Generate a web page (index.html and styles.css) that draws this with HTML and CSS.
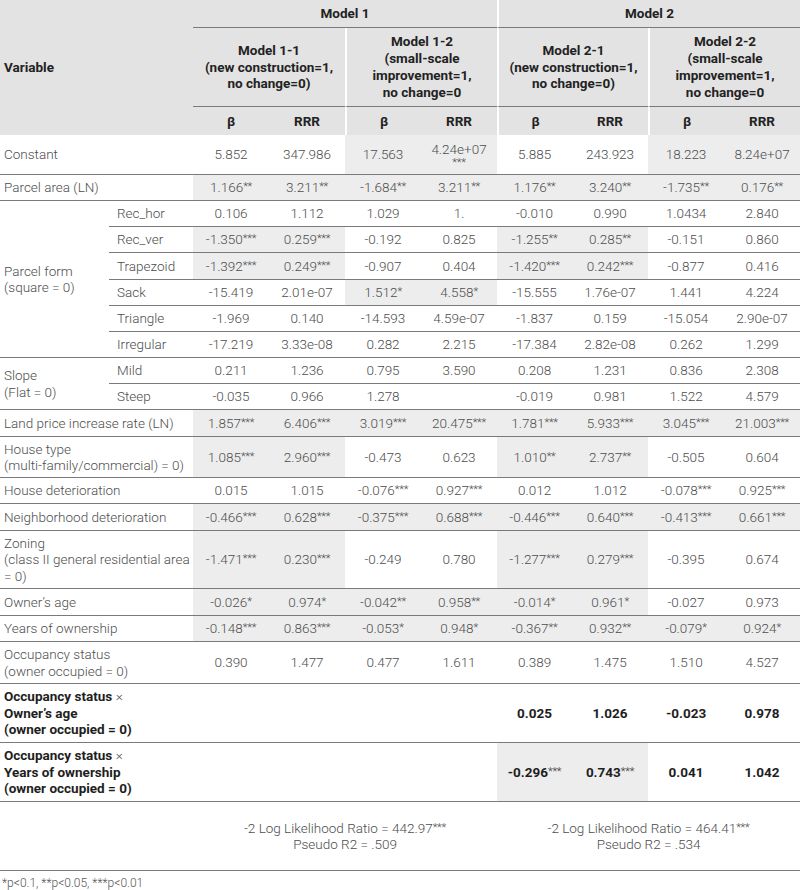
FILE: index.html
```html
<!DOCTYPE html>
<html lang="en">
<head>
<meta charset="utf-8">
<title>Regression table</title>
<link rel="stylesheet" href="styles.css">
</head>
<body>
<table class="tbl">
  <colgroup>
    <col class="c-lab1"><col class="c-lab2">
    <col class="c-d"><col class="c-d"><col class="c-d"><col class="c-d">
    <col class="c-d5"><col class="c-d"><col class="c-d"><col class="c-d">
  </colgroup>
  <thead>
    <tr class="h1">
      <th class="var" rowspan="3" colspan="2">Variable</th>
      <th class="mh" colspan="4">Model 1</th>
      <th class="mh div" colspan="4">Model 2</th>
    </tr>
    <tr class="h2">
      <th class="sh" colspan="2">Model 1-1<br>(new construction=1,<br>no change=0)</th>
      <th class="sh div" colspan="2">Model 1-2<br>(small-scale<br>improvement=1,<br>no change=0</th>
      <th class="sh div" colspan="2">Model 2-1<br>(new construction=1,<br>no change=0)</th>
      <th class="sh div" colspan="2">Model 2-2<br>(small-scale<br>improvement=1,<br>no change=0</th>
    </tr>
    <tr class="h3">
      <th class="bh">β</th><th class="bh">RRR</th>
      <th class="bh div">β</th><th class="bh">RRR</th>
      <th class="bh div">β</th><th class="bh">RRR</th>
      <th class="bh div">β</th><th class="bh">RRR</th>
    </tr>
  </thead>
  <tbody>
    <tr class="r40">
      <td class="lab" colspan="2">Constant</td>
      <td>5.852</td><td>347.986</td>
      <td class="sh1">17.563</td><td class="sh1 stack">4.24e+07<br><span class="st">***</span></td>
      <td>5.885</td><td>243.923</td>
      <td class="sh1">18.223</td><td class="sh1">8.24e+07</td>
    </tr>
    <tr class="r26">
      <td class="lab" colspan="2">Parcel area (LN)</td>
      <td class="sh1">1.166<span class="st">**</span></td><td class="sh1">3.211<span class="st">**</span></td>
      <td class="sh1">-1.684<span class="st">**</span></td><td class="sh1">3.211<span class="st">**</span></td>
      <td class="sh1">1.176<span class="st">**</span></td><td class="sh1">3.240<span class="st">**</span></td>
      <td class="sh1">-1.735<span class="st">**</span></td><td class="sh1">0.176<span class="st">**</span></td>
    </tr>
    <tr class="r26">
      <td class="lab" rowspan="6">Parcel form<br>(square = 0)</td>
      <td class="sub">Rec_hor</td>
      <td>0.106</td><td>1.112</td>
      <td>1.029</td><td>1.</td>
      <td>-0.010</td><td>0.990</td>
      <td>1.0434</td><td>2.840</td>
    </tr>
    <tr class="r26">
      <td class="sub">Rec_ver</td>
      <td class="sh1">-1.350<span class="st">***</span></td><td class="sh1">0.259<span class="st">***</span></td>
      <td>-0.192</td><td>0.825</td>
      <td class="sh1">-1.255<span class="st">**</span></td><td class="sh1">0.285<span class="st">**</span></td>
      <td>-0.151</td><td>0.860</td>
    </tr>
    <tr class="r27">
      <td class="sub">Trapezoid</td>
      <td class="sh1">-1.392<span class="st">***</span></td><td class="sh1">0.249<span class="st">***</span></td>
      <td>-0.907</td><td>0.404</td>
      <td class="sh1">-1.420<span class="st">***</span></td><td class="sh1">0.242<span class="st">***</span></td>
      <td>-0.877</td><td>0.416</td>
    </tr>
    <tr class="r26">
      <td class="sub">Sack</td>
      <td>-15.419</td><td>2.01e-07</td>
      <td class="sh1">1.512<span class="st">*</span></td><td class="sh1">4.558<span class="st">*</span></td>
      <td>-15.555</td><td>1.76e-07</td>
      <td>1.441</td><td>4.224</td>
    </tr>
    <tr class="r26">
      <td class="sub">Triangle</td>
      <td>-1.969</td><td>0.140</td>
      <td>-14.593</td><td>4.59e-07</td>
      <td>-1.837</td><td>0.159</td>
      <td>-15.054</td><td>2.90e-07</td>
    </tr>
    <tr class="r26">
      <td class="sub">Irregular</td>
      <td>-17.219</td><td>3.33e-08</td>
      <td>0.282</td><td>2.215</td>
      <td>-17.384</td><td>2.82e-08</td>
      <td>0.262</td><td>1.299</td>
    </tr>
    <tr class="r26">
      <td class="lab" rowspan="2">Slope<br>(Flat = 0)</td>
      <td class="sub">Mild</td>
      <td>0.211</td><td>1.236</td>
      <td>0.795</td><td>3.590</td>
      <td>0.208</td><td>1.231</td>
      <td>0.836</td><td>2.308</td>
    </tr>
    <tr class="r26">
      <td class="sub">Steep</td>
      <td>-0.035</td><td>0.966</td>
      <td>1.278</td><td></td>
      <td>-0.019</td><td>0.981</td>
      <td>1.522</td><td>4.579</td>
    </tr>
    <tr class="r27">
      <td class="lab" colspan="2">Land price increase rate (LN)</td>
      <td class="sh1">1.857<span class="st">***</span></td><td class="sh1">6.406<span class="st">***</span></td>
      <td class="sh1">3.019<span class="st">***</span></td><td class="sh1">20.475<span class="st">***</span></td>
      <td class="sh1">1.781<span class="st">***</span></td><td class="sh1">5.933<span class="st">***</span></td>
      <td class="sh1">3.045<span class="st">***</span></td><td class="sh1">21.003<span class="st">***</span></td>
    </tr>
    <tr class="r41">
      <td class="lab" colspan="2">House type<br>(multi-family/commercial) = 0)</td>
      <td class="sh1">1.085<span class="st">***</span></td><td class="sh1">2.960<span class="st">***</span></td>
      <td>-0.473</td><td>0.623</td>
      <td class="sh1">1.010<span class="st">**</span></td><td class="sh1">2.737<span class="st">**</span></td>
      <td>-0.505</td><td>0.604</td>
    </tr>
    <tr class="r26">
      <td class="lab" colspan="2">House deterioration</td>
      <td>0.015</td><td>1.015</td>
      <td>-0.076<span class="st">***</span></td><td>0.927<span class="st">***</span></td>
      <td>0.012</td><td>1.012</td>
      <td>-0.078<span class="st">***</span></td><td>0.925<span class="st">***</span></td>
    </tr>
    <tr class="r27">
      <td class="lab" colspan="2">Neighborhood deterioration</td>
      <td class="sh1">-0.466<span class="st">***</span></td><td class="sh1">0.628<span class="st">***</span></td>
      <td class="sh1">-0.375<span class="st">***</span></td><td class="sh1">0.688<span class="st">***</span></td>
      <td class="sh1">-0.446<span class="st">***</span></td><td class="sh1">0.640<span class="st">***</span></td>
      <td class="sh1">-0.413<span class="st">***</span></td><td class="sh1">0.661<span class="st">***</span></td>
    </tr>
    <tr class="r58">
      <td class="lab nw" colspan="2">Zoning<br>(class II general residential area<br>= 0)</td>
      <td class="sh1">-1.471<span class="st">***</span></td><td class="sh1">0.230<span class="st">***</span></td>
      <td>-0.249</td><td>0.780</td>
      <td class="sh1">-1.277<span class="st">***</span></td><td class="sh1">0.279<span class="st">***</span></td>
      <td>-0.395</td><td>0.674</td>
    </tr>
    <tr class="r27">
      <td class="lab" colspan="2">Owner’s age</td>
      <td class="sh1">-0.026<span class="st">*</span></td><td class="sh1">0.974<span class="st">*</span></td>
      <td class="sh1">-0.042<span class="st">**</span></td><td class="sh1">0.958<span class="st">**</span></td>
      <td class="sh1">-0.014<span class="st">*</span></td><td class="sh1">0.961<span class="st">*</span></td>
      <td>-0.027</td><td>0.973</td>
    </tr>
    <tr class="r26">
      <td class="lab" colspan="2">Years of ownership</td>
      <td class="sh1">-0.148<span class="st">***</span></td><td class="sh1">0.863<span class="st">***</span></td>
      <td class="sh1">-0.053<span class="st">*</span></td><td class="sh1">0.948<span class="st">*</span></td>
      <td class="sh1">-0.367<span class="st">**</span></td><td class="sh1">0.932<span class="st">**</span></td>
      <td class="sh1">-0.079<span class="st">*</span></td><td class="sh1">0.924<span class="st">*</span></td>
    </tr>
    <tr class="r42">
      <td class="lab" colspan="2">Occupancy status<br>(owner occupied = 0)</td>
      <td>0.390</td><td>1.477</td>
      <td>0.477</td><td>1.611</td>
      <td>0.389</td><td>1.475</td>
      <td>1.510</td><td>4.527</td>
    </tr>
    <tr class="r59">
      <td class="lab bold" colspan="2">Occupancy status <span class="x">×</span><br>Owner’s age<br>(owner occupied = 0)</td>
      <td></td><td></td>
      <td></td><td></td>
      <td class="bold">0.025</td><td class="bold">1.026</td>
      <td class="bold">-0.023</td><td class="bold">0.978</td>
    </tr>
    <tr class="r59">
      <td class="lab bold" colspan="2">Occupancy status <span class="x">×</span><br>Years of ownership<br>(owner occupied = 0)</td>
      <td></td><td></td>
      <td></td><td></td>
      <td class="sh1 bold">-0.296<span class="st">***</span></td><td class="sh1 bold">0.743<span class="st">***</span></td>
      <td class="bold">0.041</td><td class="bold">1.042</td>
    </tr>
    <tr class="r69">
      <td colspan="2"></td>
      <td class="stat" colspan="4">-2 Log Likelihood Ratio = 442.97<span class="st">***</span><br>Pseudo R2 = .509</td>
      <td class="stat" colspan="4">-2 Log Likelihood Ratio = 464.41<span class="st">***</span><br>Pseudo R2 = .534</td>
    </tr>
  </tbody>
</table>
<p class="note">*p&lt;0.1, **p&lt;0.05, ***p&lt;0.01</p>
</body>
</html>
```

FILE: styles.css
```css
html, body {
  margin: 0;
  padding: 0;
  background: #fff;
}
body {
  width: 800px;
  font-family: Roboto, "Liberation Sans", sans-serif;
  font-size: 13.5px;
  color: #4d4d4d;
}
.tbl {
  width: 800px;
  table-layout: fixed;
  border-collapse: separate;
  border-spacing: 0;
}
.c-lab1 { width: 109px; }
.c-lab2 { width: 84px; }
.c-d { width: 76px; }
.c-d5 { width: 75px; }

th, td {
  padding: 0;
  vertical-align: middle;
  text-align: center;
  line-height: 16.5px;
}
th {
  background: #e3e3e3;
  color: #222;
  font-weight: 700;
}
.h1 { height: 28px; }
.h2 { height: 79px; }
.h3 { height: 28px; }
.var {
  text-align: left;
  padding-left: 4px;
}
.mh, .sh {
  border-bottom: 1px solid #7a7a7a;
}
.div {
  border-left: 2px solid #fff;
}
.sh { line-height: 16.8px; }

tbody td {
  font-weight: 300;
  border-bottom: 1px solid #7a7a7a;
  white-space: nowrap;
}
.r26 { height: 26px; }
.r27 { height: 27px; }
.r40 { height: 40px; }
.r41 { height: 41px; }
.r42 { height: 42px; }
.r58 { height: 58px; }
.r59 { height: 59px; }
.r69 { height: 69px; }

.lab {
  text-align: left;
  padding-left: 4px;
}
.sub {
  text-align: left;
  padding-left: 8px;
}
.nw { white-space: nowrap; overflow: visible; }
.sh1 { background: #ededed; }
.st {
  font-size: 11px;
  vertical-align: 2px;
  letter-spacing: -0.2px;
}
.stack { line-height: 12px; padding-top: 2px; }
.stack .st { vertical-align: 0; }
tbody td.bold {
  font-weight: 700;
  color: #1e1e1e;
}
.bold .st { font-weight: 300; color: #333; }
.x { font-weight: 300; color: #555; }
.stat { line-height: 16px; }

.note {
  margin: 5px 0 0 2px;
  font-size: 12px;
  font-weight: 300;
  color: #555;
}
```
